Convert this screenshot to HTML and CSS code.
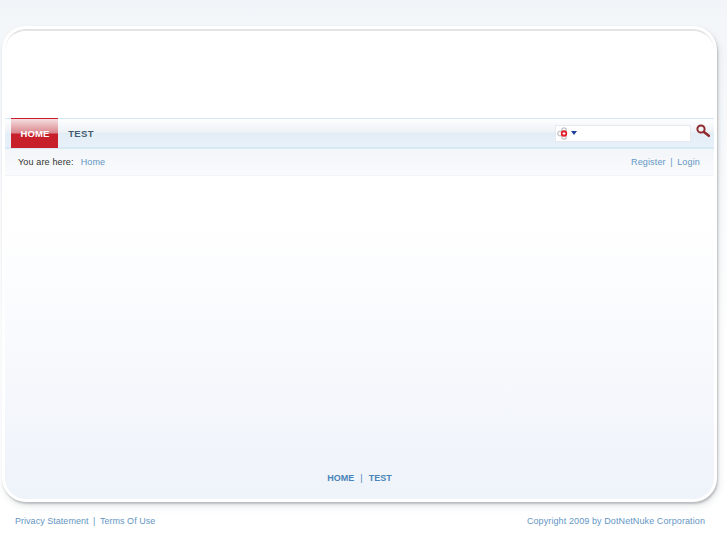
FILE: index.html
```html
<!DOCTYPE html>
<html lang="en">
<head>
<meta charset="utf-8">
<title>Home</title>
<link rel="stylesheet" href="styles.css">
</head>
<body>
<div class="page">
  <div class="card">
    <div class="inner">
      <div class="header"></div>
      <nav class="nav">
        <a class="tab active">HOME</a>
        <a class="tab">TEST</a>
        <div class="search">
          <div class="search-box">
            <svg class="engine" width="13" height="13" viewBox="0 0 13 13">
              <circle cx="7" cy="3" r="2.2" fill="none" stroke="#c4c4c4" stroke-width="1.3"/>
              <circle cx="3" cy="6.5" r="2.3" fill="none" stroke="#c4c4c4" stroke-width="1.3"/>
              <circle cx="7" cy="10" r="2.2" fill="none" stroke="#c4c4c4" stroke-width="1.3"/>
              <circle cx="7" cy="6.5" r="3.2" fill="#e2202c"/>
              <path d="M5.5 6.5h3M7 5v3" stroke="#fff" stroke-width="1"/>
            </svg>
            <span class="caret"></span>
          </div>
          <svg class="glass" width="14" height="14" viewBox="0 0 14 14">
            <circle cx="5" cy="5" r="3.6" fill="none" stroke="#8f2a2e" stroke-width="2"/>
            <path d="M8 8L12.8 11.8" stroke="#8f2a2e" stroke-width="2.6" stroke-linecap="round"/>
          </svg>
        </div>
      </nav>
      <div class="crumbs">
        <div class="crumb-left"><span class="here">You are here:</span><a class="link">Home</a></div>
        <div class="crumb-right"><a class="link">Register</a><span class="sep">|</span><a class="link">Login</a></div>
      </div>
      <main class="content">
        <div class="bottom-links"><a>HOME</a><span class="sep">|</span><a>TEST</a></div>
      </main>
    </div>
  </div>
  <footer class="footer">
    <div><a class="link">Privacy Statement</a><span class="sep">|</span><a class="link">Terms Of Use</a></div>
    <div class="copyright"><a class="link">Copyright 2009 by DotNetNuke Corporation</a></div>
  </footer>
</div>
</body>
</html>
```
FILE: styles.css
```css
* { box-sizing: border-box; }
html, body { margin: 0; height: 100%; }
body {
  background: linear-gradient(#f1f5f9 0, #f4f7fa 30px, #ffffff 330px);
  font-family: "Liberation Sans", Arial, sans-serif;
  font-size: 9px;
  letter-spacing: .03px;
  color: #333;
  overflow: hidden;
}
.page { width: 727px; height: 545px; padding: 26px 0 0 2px; }
.card {
  width: 715px;
  height: 476px;
  border: 3px solid #fff;
  border-radius: 24px;
  box-shadow: 1px 2px 2px rgba(140,145,150,.5), 2px 4px 7px rgba(170,175,180,.3);
  background: #fff;
}
.inner {
  height: 100%;
  border-top: 2px solid #e4e4e4;
  border-radius: 21px;
  background: linear-gradient(#fff 0, #fff 190px, #eff3fa 460px);
  display: flex;
  flex-direction: column;
  overflow: hidden;
}
.header { height: 87px; flex: none; }
.nav {
  height: 31px;
  flex: none;
  display: flex;
  align-items: stretch;
  padding-left: 6px;
  padding-right: 4px;
  border-top: 1px solid #d8e8f6;
  border-bottom: 2px solid #d8e8f5;
  background: linear-gradient(#fdfeff 0, #eef2f6 13px, #e3edf5 14px, #e8f1f9 28px);
}
.tab {
  width: 47px;
  margin-top: -1px;
  margin-bottom: -1px;
  display: flex;
  align-items: center;
  justify-content: center;
  font-weight: bold;
  font-size: 9.5px;
  letter-spacing: .3px;
  color: #455d73;
}
.tab.active {
  color: #fff;
  letter-spacing: .15px;
  padding-left: 1px;
  border-top: 1px solid #c8202a;
  background: linear-gradient(#f5dfe1 0, #da858c 14px, #c8202a 15px, #c8202a 100%);
}
.tab + .tab { width: 46px; }
.search { margin-left: auto; display: flex; align-items: center; gap: 5px; }
.search-box {
  width: 136px;
  height: 17px;
  background: #fff;
  border: 1px solid #e6eaee;
  display: flex;
  align-items: center;
  padding-left: 1px;
  gap: 1px;
}
.caret {
  width: 0; height: 0;
  border-left: 3.5px solid transparent;
  border-right: 3.5px solid transparent;
  border-top: 4px solid #1f3f9a;
}
.glass { margin-top: -4px; }
.crumbs {
  height: 27px;
  flex: none;
  display: flex;
  align-items: center;
  justify-content: space-between;
  padding: 0 14px 1px 13px;
  background: linear-gradient(#f3f6f9, #f9fafc);
  border-bottom: 1px solid #f2f4f7;
  letter-spacing: .15px;
}
.here { margin-right: 7px; color: #333; }
.link { color: #6496c4; }
.sep { margin: 0 4.5px; color: #6496c4; }
.content {
  flex: 1;
  display: flex;
  align-items: flex-end;
  justify-content: center;
  padding-bottom: 16px;
}
.bottom-links { font-weight: bold; color: #4a84b8; font-size: 9px; letter-spacing: 0; }
.bottom-links .sep { margin: 0 6px; color: #4a84b8; font-weight: normal; }
.footer {
  display: flex;
  justify-content: space-between;
  padding: 14px 22px 0 13px;
}
.copyright { letter-spacing: .1px; }
```
